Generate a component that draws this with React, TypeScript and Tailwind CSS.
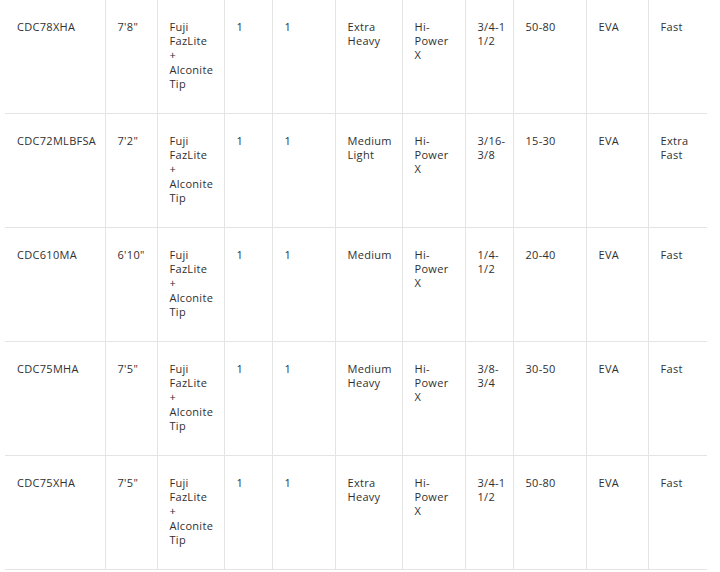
import React from 'react';

interface RodSpec {
  model: string;
  length: string;
  guides: string;
  pieces: string;
  handles: string;
  power: string;
  blank: string;
  lure: string;
  line: string;
  grip: string;
  action: string;
}

const rods: RodSpec[] = [
  { model: 'CDC78XHA', length: '7\'8"', guides: 'Fuji\nFazLite\n+\nAlconite\nTip', pieces: '1', handles: '1', power: 'Extra\nHeavy', blank: 'Hi-\nPower\nX', lure: '3/4-1\n1/2', line: '50-80', grip: 'EVA', action: 'Fast' },
  { model: 'CDC72MLBFSA', length: '7\'2"', guides: 'Fuji\nFazLite\n+\nAlconite\nTip', pieces: '1', handles: '1', power: 'Medium\nLight', blank: 'Hi-\nPower\nX', lure: '3/16-\n3/8', line: '15-30', grip: 'EVA', action: 'Extra\nFast' },
  { model: 'CDC610MA', length: '6\'10"', guides: 'Fuji\nFazLite\n+\nAlconite\nTip', pieces: '1', handles: '1', power: 'Medium', blank: 'Hi-\nPower\nX', lure: '1/4-\n1/2', line: '20-40', grip: 'EVA', action: 'Fast' },
  { model: 'CDC75MHA', length: '7\'5"', guides: 'Fuji\nFazLite\n+\nAlconite\nTip', pieces: '1', handles: '1', power: 'Medium\nHeavy', blank: 'Hi-\nPower\nX', lure: '3/8-\n3/4', line: '30-50', grip: 'EVA', action: 'Fast' },
  { model: 'CDC75XHA', length: '7\'5"', guides: 'Fuji\nFazLite\n+\nAlconite\nTip', pieces: '1', handles: '1', power: 'Extra\nHeavy', blank: 'Hi-\nPower\nX', lure: '3/4-1\n1/2', line: '50-80', grip: 'EVA', action: 'Fast' },
];

const colWidths = [100, 52, 67, 48, 63, 67, 63, 48, 73, 62, 59];
const keys: (keyof RodSpec)[] = ['model', 'length', 'guides', 'pieces', 'handles', 'power', 'blank', 'lure', 'line', 'grip', 'action'];

export default function App() {
  return (
    <div className="w-[720px] h-[572px] bg-white overflow-hidden pl-[5px]" style={{ fontFamily: '"Open Sans", "Liberation Sans", sans-serif' }}>
      <table className="table-fixed border-collapse w-[702px] text-[11px] leading-[14.2px] font-medium tracking-[0.3px] text-[#303030]">
        <colgroup>
          {colWidths.map((w, i) => (
            <col key={i} style={{ width: w }} />
          ))}
        </colgroup>
        <tbody>
          {rods.map(rod => (
            <tr key={rod.model} className="border-b border-[#e4e4e4]">
              {keys.map((k, i) => (
                <td
                  key={k}
                  className={`align-top pt-[20px] pb-[22px] pl-[12px] pr-[6px] whitespace-pre-line ${i > 0 ? 'border-l border-[#e4e4e4]' : ''}`}
                >
                  {rod[k]}
                </td>
              ))}
            </tr>
          ))}
        </tbody>
      </table>
    </div>
  );
}
